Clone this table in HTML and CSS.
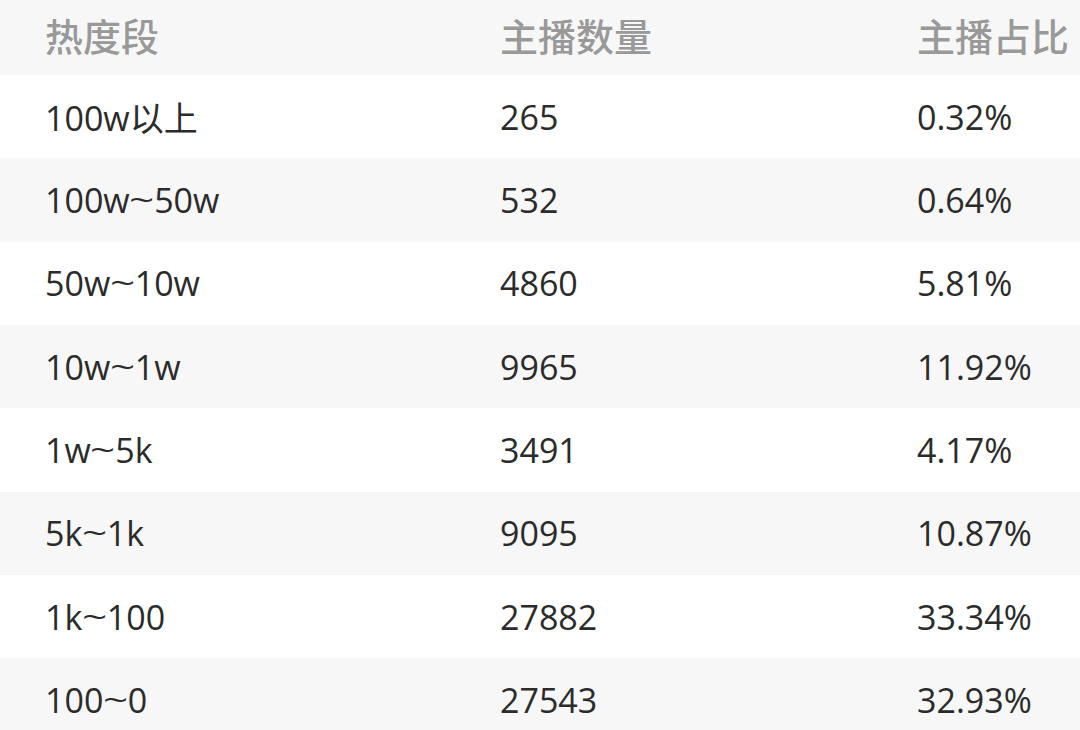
FILE: index.html
```html
<!DOCTYPE html>
<html lang="zh">
<head>
<meta charset="utf-8">
<link rel="stylesheet" href="styles.css">
</head>
<body>
<div class="table">
  <div class="row head"><div>热度段</div><div>主播数量</div><div>主播占比</div></div>
  <div class="row"><div>100w以上</div><div>265</div><div>0.32%</div></div>
  <div class="row alt"><div>100w<span class="tilde">~</span>50w</div><div>532</div><div>0.64%</div></div>
  <div class="row"><div>50w<span class="tilde">~</span>10w</div><div>4860</div><div>5.81%</div></div>
  <div class="row alt"><div>10w<span class="tilde">~</span>1w</div><div>9965</div><div>11.92%</div></div>
  <div class="row"><div>1w<span class="tilde">~</span>5k</div><div>3491</div><div>4.17%</div></div>
  <div class="row alt"><div>5k<span class="tilde">~</span>1k</div><div>9095</div><div>10.87%</div></div>
  <div class="row"><div>1k<span class="tilde">~</span>100</div><div>27882</div><div>33.34%</div></div>
  <div class="row alt"><div>100<span class="tilde">~</span>0</div><div>27543</div><div>32.93%</div></div>
</div>
</body>
</html>
```

FILE: styles.css
```css
html, body {
  margin: 0;
  padding: 0;
  background: #ffffff;
  overflow: hidden;
}
.table {
  display: flex;
  flex-direction: column;
  font-family: "Open Sans", "Noto Sans CJK SC", sans-serif;
  color: #2b2b2b;
}
.row {
  display: grid;
  grid-template-columns: 455px 417px 1fr;
  align-items: center;
  height: 83.33px;
  padding-left: 45px;
  font-size: 34px;
  white-space: nowrap;
}
.row.alt {
  background: #f7f7f7;
}
.row.head {
  box-sizing: border-box;
  height: 75px;
  padding-bottom: 6px;
  background: #f7f7f7;
  color: #999999;
  font-size: 38px;
  font-weight: 500;
}
.tilde {
  display: inline-block;
  margin: 0 2.5px;
  transform: scale(1.3, 0.85);
}
```
